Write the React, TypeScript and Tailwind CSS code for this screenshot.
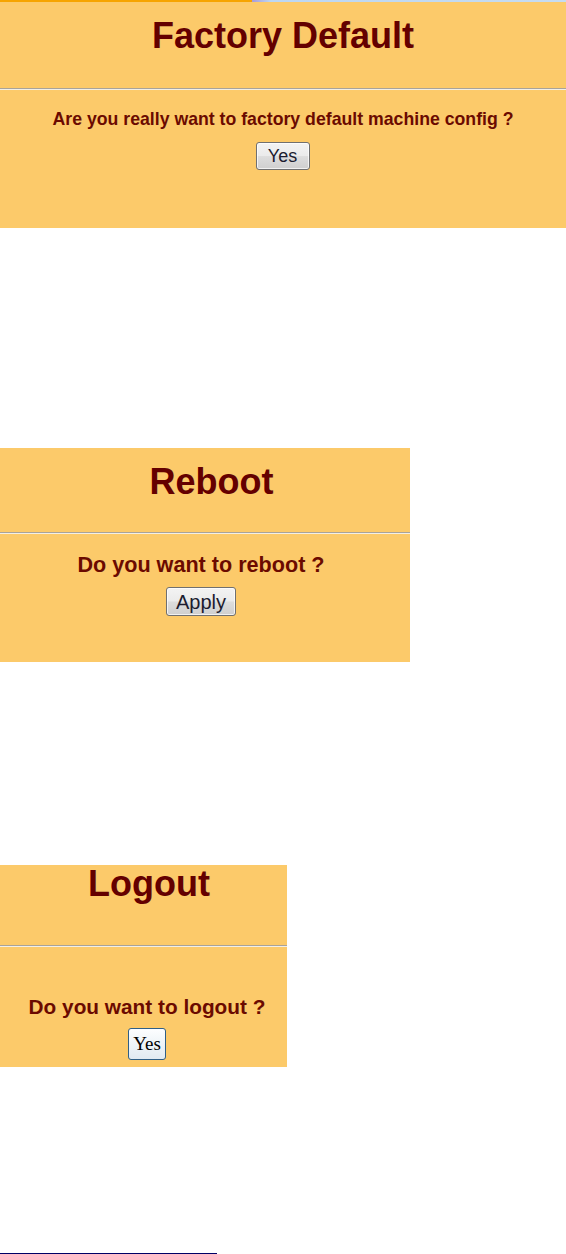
import React from 'react';

const panelBg = 'bg-[#fcca6a]';

const Separator: React.FC = () => (
  <div className="flex flex-col">
    <div className="h-[1px] bg-[#a9a39a]" />
    <div className="h-[1px] bg-[#f3efe6]" />
  </div>
);

const GrayButton: React.FC<{ label: string; className?: string }> = ({ label, className }) => (
  <button
    type="button"
    className={`flex items-center justify-center rounded-[3px] border border-[#707070] bg-[linear-gradient(#f3f3f3_0%,#ebebeb_48%,#dddddd_52%,#cfcfcf_100%)] text-[#1c1c30] shadow-[inset_0_0_0_1px_rgba(255,255,255,0.7)] ${className ?? ''}`}
  >
    {label}
  </button>
);

const App: React.FC = () => {
  return (
    <div className="w-[566px] h-[1254px] bg-white flex flex-col font-['Liberation_Sans',Arial,sans-serif]">
      {/* Factory Default */}
      <section className={`w-full h-[228px] ${panelBg} flex flex-col`}>
        <div className="flex h-[2px]">
          <div className="w-[252px] bg-[#f6a400]" />
          <div className="flex-1 bg-[linear-gradient(90deg,#a99bd6_0%,#bcd7f3_6%,#c6dcf1_100%)]" />
        </div>
        <div className="h-[86px] pt-[16px] text-center">
          <h1 className="text-[36px] leading-[36px] font-bold text-[#640000]">Factory Default</h1>
        </div>
        <Separator />
        <div className="flex flex-col items-center pt-[20px]">
          <p className="text-[17.7px] leading-[18px] font-bold text-[#6b0a00]">
            Are you really want to factory default machine config ?
          </p>
          <GrayButton label="Yes" className="mt-[14px] w-[54px] h-[28px] text-[18px] pr-[1px]" />
        </div>
      </section>

      {/* Reboot */}
      <section className={`mt-[220px] w-[410px] h-[214px] ${panelBg} flex flex-col`}>
        <div className="h-[84px] pt-[16px] pl-[13px] text-center">
          <h1 className="text-[36px] leading-[36px] font-bold text-[#640000]">Reboot</h1>
        </div>
        <Separator />
        <div className="flex flex-col items-center pt-[20px] pr-[8px]">
          <p className="text-[21.6px] leading-[22px] font-bold text-[#6b0a00]">Do you want to reboot ?</p>
          <GrayButton label="Apply" className="mt-[11px] w-[70px] h-[29px] text-[20px]" />
        </div>
      </section>

      {/* Logout */}
      <section className={`mt-[203px] w-[287px] h-[202px] ${panelBg} flex flex-col`}>
        <div className="h-[80px] pt-[1px] pl-[11px] text-center">
          <h1 className="text-[36px] leading-[36px] font-bold text-[#640000]">Logout</h1>
        </div>
        <Separator />
        <div className="flex flex-col items-center pt-[49px] pl-[7px]">
          <p className="text-[20.8px] leading-[21px] font-bold text-[#6b0a00]">Do you want to logout ?</p>
          <button
            type="button"
            className="mt-[11px] w-[38px] h-[32px] rounded-[3px] border border-[#2f5f86] bg-[linear-gradient(#fdfeff_0%,#eef4f8_50%,#e1eaf1_100%)] font-['Liberation_Serif','Times_New_Roman',serif] text-[19px] text-black flex items-center justify-center"
          >
            Yes
          </button>
        </div>
      </section>

      <div className="mt-auto h-[1px] w-[217px] bg-[#000066]" />
    </div>
  );
};

export default App;
